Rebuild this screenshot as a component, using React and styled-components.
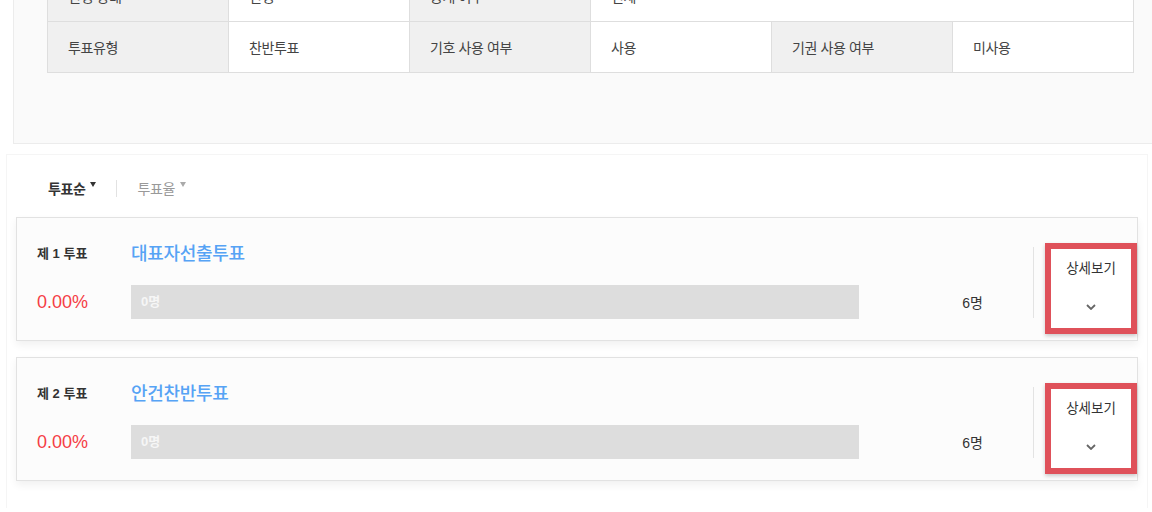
import React from 'react';
import styled, { createGlobalStyle } from 'styled-components';

const GlobalStyle = createGlobalStyle`
	html, body {
		margin: 0;
		padding: 0;
		background: #fff;
		overflow: hidden;
	}
	body {
		font-family: 'Liberation Sans', 'Noto Sans CJK KR', sans-serif;
		color: #333;
	}
	* {
		box-sizing: border-box;
	}
`;

/*
상단 투표 정보 패널
*/
const InfoPanel = styled.div`
	margin: -40px 0 0 13px;
	padding: 9px 0 70px 33px;
	background: #fafafa;
	border: 1px solid #ececec;
	border-right: none;
`;

const InfoTable = styled.table`
	width: 1087px;
	border-collapse: collapse;
	table-layout: fixed;
	font-size: 14px;
	letter-spacing: -0.4px;
	color: #444;
	th,
	td {
		height: 51px;
		padding: 0 0 0 20px;
		border: 1px solid #dedede;
		text-align: left;
		font-weight: normal;
	}
	th {
		background: #f0f0f0;
	}
	td {
		background: #fff;
	}
`;

/*
투표 목록 패널
*/
const ListPanel = styled.div`
	width: 1142px;
	margin: 10px 0 0 6px;
	padding: 23px 9px 27px;
	background: #fff;
	border: 1px solid #f5f5f5;
	border-bottom: none;
`;

const SortBar = styled.div`
	display: flex;
	align-items: center;
	height: 20px;
	margin: 0 0 19px 32px;
`;

const SortTab = styled.span`
	display: flex;
	align-items: flex-start;
	font-size: 14px;
	letter-spacing: -0.4px;
	font-weight: ${(p) => (p.active ? 'bold' : 'normal')};
	color: ${(p) => (p.active ? '#333' : '#999')};
	&::after {
		content: '';
		margin: 4px 0 0 5px;
		border-left: 3px solid transparent;
		border-right: 3px solid transparent;
		border-top: 5px solid ${(p) => (p.active ? '#333' : '#aaa')};
	}
`;

const SortDivider = styled.span`
	width: 1px;
	height: 17px;
	margin: 0 20px;
	background: #e2e2e2;
`;

const CardList = styled.div`
	display: flex;
	flex-direction: column;
	gap: 16px;
`;

const Card = styled.div`
	display: flex;
	align-items: flex-start;
	width: 1122px;
	padding-left: 20px;
	background: #fcfcfc;
	border: 1px solid #e2e2e2;
	box-shadow: 0 4px 8px rgba(0, 0, 0, 0.06);
`;

const CardBody = styled.div`
	display: grid;
	grid-template-columns: 94px 728px 174px;
	grid-template-rows: 22px 34px;
	row-gap: 22px;
	align-items: center;
	padding: 23px 0 21px;
`;

const VoteNo = styled.div`
	font-size: 13px;
	font-weight: bold;
	color: #333;
`;

const VoteTitle = styled.div`
	grid-column: 2 / 4;
	font-size: 18px;
	font-weight: 500;
	letter-spacing: -0.3px;
	color: #56a3f5;
`;

const Percent = styled.div`
	font-size: 18px;
	color: #f53d45;
`;

const Bar = styled.div`
	height: 34px;
	line-height: 34px;
	padding-left: 10px;
	background: #dddddd;
	font-size: 13px;
	font-weight: bold;
	color: #f6f6f6;
`;

const Count = styled.div`
	padding-right: 50px;
	text-align: right;
	font-size: 14px;
	color: #333;
`;

const CardDivider = styled.div`
	width: 1px;
	height: 71px;
	margin-top: 29px;
	background: #e3e3e3;
`;

const DetailButton = styled.button`
	display: flex;
	flex-direction: column;
	align-items: center;
	width: 92px;
	height: 91px;
	margin: 25px 0 0 11px;
	padding: 11px 0 0;
	background: #fff;
	border: 6px solid #df515a;
	box-shadow: 0 2px 4px rgba(0, 0, 0, 0.2);
	font-family: inherit;
	font-size: 13.5px;
	line-height: 18px;
	color: #333;
	cursor: pointer;
	svg {
		margin-top: 26px;
	}
`;

const Chevron = () => (
	<svg width="10" height="6" viewBox="0 0 10 6">
		<path d="M1 1l4 4 4-4" fill="none" stroke="#666" strokeWidth="1.8" />
	</svg>
);

const votes = [
	{ no: 1, title: '대표자선출투표', percent: '0.00%', count: 0, total: 6 },
	{ no: 2, title: '안건찬반투표', percent: '0.00%', count: 0, total: 6 },
];

const VoteCard = ({ vote }) => (
	<Card>
		<CardBody>
			<VoteNo>제 {vote.no} 투표</VoteNo>
			<VoteTitle>{vote.title}</VoteTitle>
			<Percent>{vote.percent}</Percent>
			<Bar>{vote.count}명</Bar>
			<Count>{vote.total}명</Count>
		</CardBody>
		<CardDivider />
		<DetailButton>
			상세보기
			<Chevron />
		</DetailButton>
	</Card>
);

const App = () => {
	return (
		<>
			<GlobalStyle />
			<InfoPanel>
				<InfoTable>
					<tbody>
						<tr>
							<th>진행 상태</th>
							<td>진행</td>
							<th>공개 여부</th>
							<td colSpan={3}>전체</td>
						</tr>
						<tr>
							<th>투표유형</th>
							<td>찬반투표</td>
							<th>기호 사용 여부</th>
							<td>사용</td>
							<th>기권 사용 여부</th>
							<td>미사용</td>
						</tr>
					</tbody>
				</InfoTable>
			</InfoPanel>
			<ListPanel>
				<SortBar>
					<SortTab active>투표순</SortTab>
					<SortDivider />
					<SortTab>투표율</SortTab>
				</SortBar>
				<CardList>
					{votes.map((vote) => (
						<VoteCard key={vote.no} vote={vote} />
					))}
				</CardList>
			</ListPanel>
		</>
	);
};

export default App;
